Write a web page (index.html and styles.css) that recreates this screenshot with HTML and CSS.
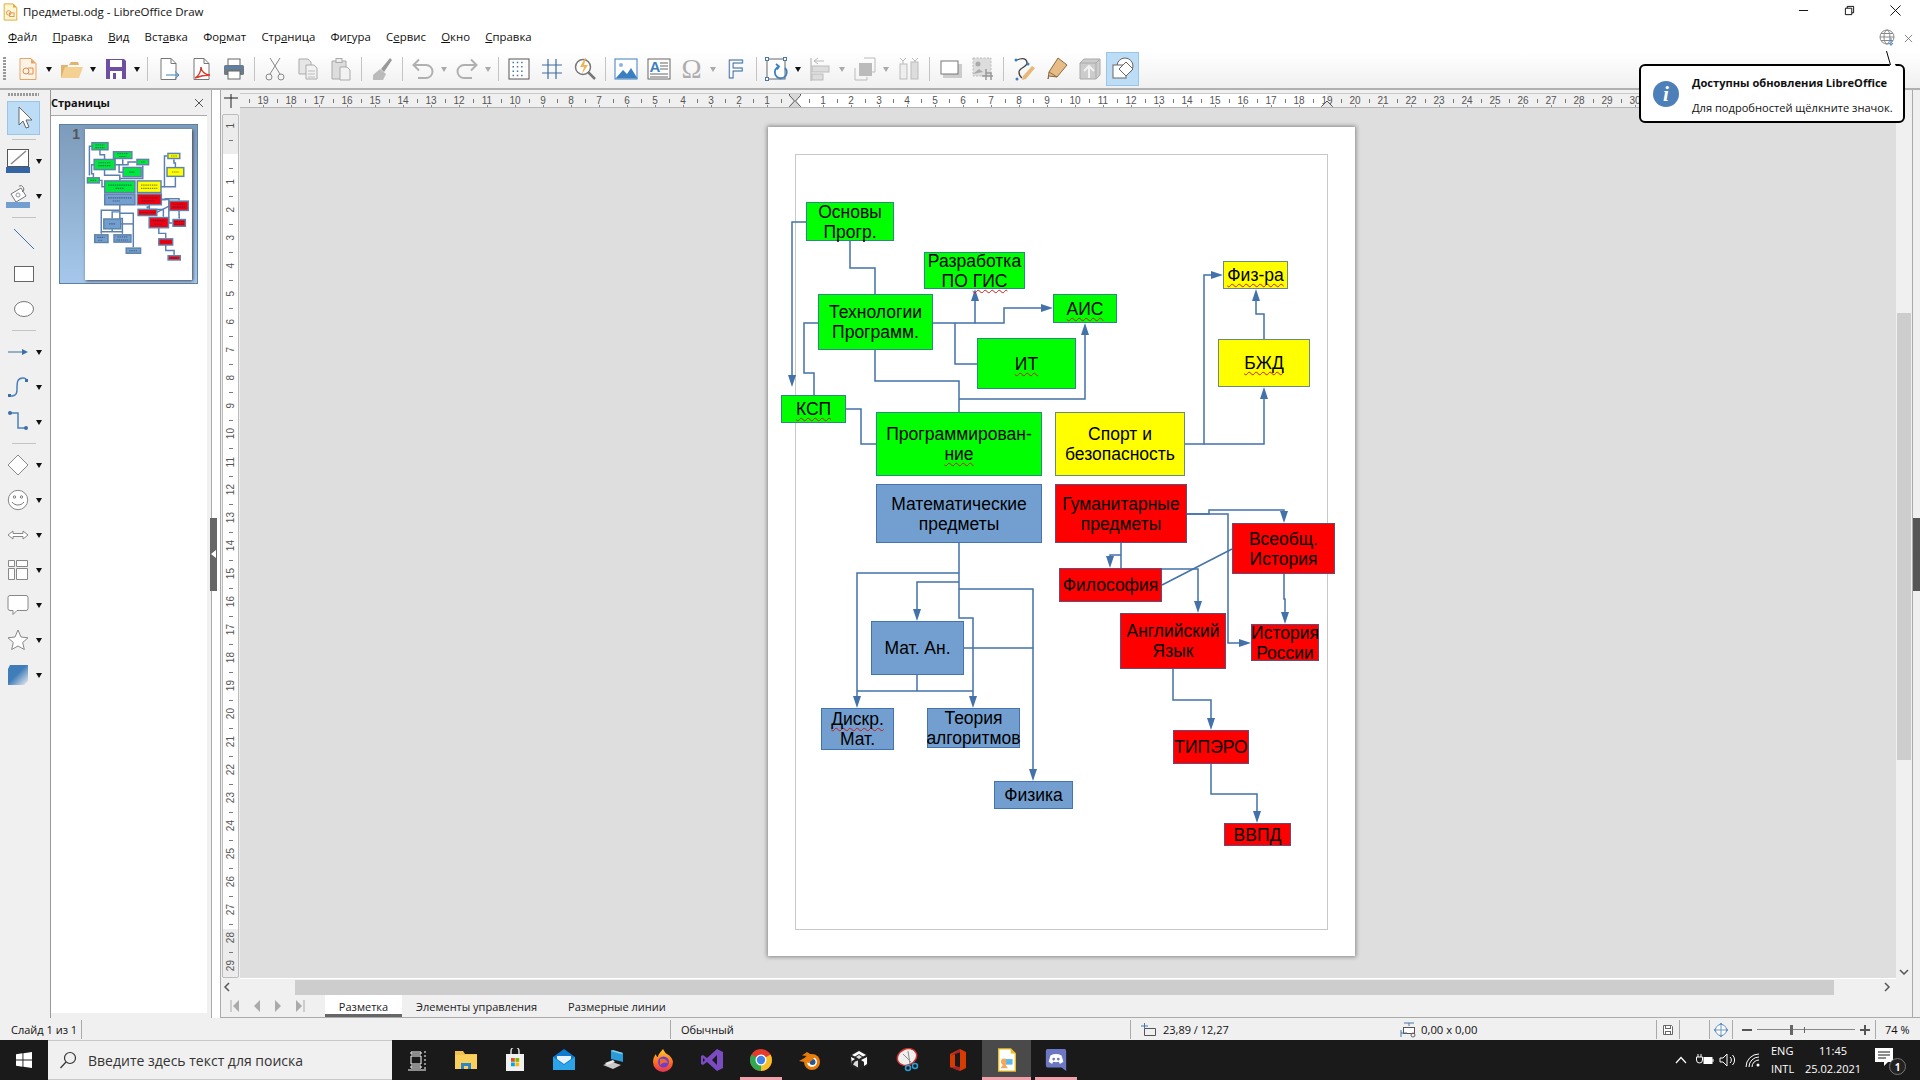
FILE: index.html
```html
<!DOCTYPE html>
<html lang="ru">
<head>
<meta charset="utf-8">
<title>Предметы.odg - LibreOffice Draw</title>
<link rel="stylesheet" href="styles.css">
</head>
<body>
<header class="titlebar">
  <svg class="app-ic" viewBox="0 0 16 20"><path d="M1 1h10l4 4v14H1z" fill="#fff6d8" stroke="#d9a820"/><path d="M11 1v4h4z" fill="#d9a820"/><circle cx="6" cy="11" r="2.5" fill="none" stroke="#e09040"/><rect x="7" y="11" width="5" height="4" fill="none" stroke="#e09040"/></svg>
  <span class="title-text">Предметы.odg - LibreOffice Draw</span>
  <div class="winbtns">
    <svg viewBox="0 0 12 12"><path d="M1 6h10" stroke="#000"/></svg>
    <svg viewBox="0 0 12 12"><path d="M1.500 3.500h7v7h-7zM3.500 3.500v-2h7v7h-2" fill="none" stroke="#000"/></svg>
    <svg viewBox="0 0 12 12"><path d="M.5 .5l11 11M11.500 .5l-11 11" stroke="#000" fill="none"/></svg>
  </div>
</header>
<nav class="menubar">
  <span><u>Ф</u>айл</span><span><u>П</u>равка</span><span><u>В</u>ид</span><span>Вст<u>а</u>вка</span><span>Фо<u>р</u>мат</span><span>Стр<u>а</u>ница</span><span>Фи<u>г</u>ура</span><span>С<u>е</u>рвис</span><span><u>О</u>кно</span><span><u>С</u>правка</span>
  <div class="menu-right">
    <svg class="globe" viewBox="0 0 16 18"><circle cx="8" cy="8" r="7" fill="none" stroke="#888"/><ellipse cx="8" cy="8" rx="3" ry="7" fill="none" stroke="#888"/><path d="M1 8h14M2 4.500h12M2 11.500h12" stroke="#888" fill="none"/><path d="M12 9v7m-2-2l2 2.500 2-2.500" stroke="#4a86c8" fill="none"/></svg>
    <svg class="mclose" viewBox="0 0 10 10"><path d="M1 1l8 8M9 1l-8 8" stroke="#777" fill="none"/></svg>
  </div>
</nav>
<div class="toolbar">
  <i class="grip-v"></i>
  <b class="t"><svg viewBox="0 0 24 24"><path d="M4 1.500h11l5 5v16H4z" fill="#fdf3e6" stroke="#e6a565"/><path d="M15 1.500l5 5h-5z" fill="#e6a565"/><circle cx="10" cy="14" r="3" fill="none" stroke="#e08a45"/><path d="M12 11h5v6h-5" fill="none" stroke="#e08a45"/></svg></b><b class="d"></b>
  <b class="t"><svg viewBox="0 0 24 24"><path d="M1 21V8h8l2-3h7l1 3h-11L5 21z" fill="#e2b36c"/><path d="M1 21L5 10h18l-4 11z" fill="#f4d193"/></svg></b><b class="d"></b>
  <b class="t"><svg viewBox="0 0 24 24"><path d="M2 2h18l2 2v18H2z" fill="#6e4ea3"/><rect x="6" y="3" width="12" height="7" fill="#fff"/><rect x="6" y="14" width="12" height="8" fill="#fff"/><rect x="9" y="16" width="3" height="6" fill="#6e4ea3"/></svg></b><b class="d"></b>
  <i class="sep"></i>
  <b class="t"><svg viewBox="0 0 24 24"><path d="M5 1.500h10l5 5v16H5z" fill="#fff" stroke="#777"/><path d="M15 1.500v5h5" fill="none" stroke="#777"/><path d="M10 18h13m-4-3.500l4 3.500-4 3.500" fill="none" stroke="#3c7fc0"/></svg></b>
  <b class="t"><svg viewBox="0 0 24 24"><path d="M5 1.500h10l5 5v16H5z" fill="#fff" stroke="#777"/><path d="M15 1.500v5h5" fill="none" stroke="#777"/><path d="M6 21c4-2 6-7 6-11 0 4 4 8 9 8-4 0-10 1-15 3z" fill="none" stroke="#d93a2b" stroke-width="1.500"/></svg></b>
  <b class="t"><svg viewBox="0 0 24 24"><rect x="6" y="2" width="12" height="7" fill="#fff" stroke="#666"/><rect x="2" y="8" width="20" height="10" rx="1.500" fill="#6f7a85"/><rect x="6" y="14" width="12" height="8" fill="#fff" stroke="#666"/><rect x="3" y="10" width="18" height="1.500" fill="#4a86c8"/></svg></b>
  <i class="sep"></i>
  <b class="t off"><svg viewBox="0 0 24 24"><circle cx="6" cy="20" r="3" fill="none" stroke="#888"/><circle cx="18" cy="20" r="3" fill="none" stroke="#888"/><path d="M7 17L17 1M17 17L7 1" stroke="#888" fill="none"/></svg></b>
  <b class="t off"><svg viewBox="0 0 24 24"><path d="M3 2h9l3 3v12H3z" fill="#e6e6e6" stroke="#aaa"/><path d="M10 8h8l3 3v11H10z" fill="#f2f2f2" stroke="#aaa"/><path d="M12 14h7M12 17h7M12 20h7" stroke="#bbb"/></svg></b>
  <b class="t off"><svg viewBox="0 0 24 24"><path d="M3 4h14v18H3z" fill="#ddd" stroke="#aaa"/><rect x="7" y="1.500" width="6" height="4" fill="#eee" stroke="#aaa"/><path d="M11 10h7l3 3v10H11z" fill="#f2f2f2" stroke="#aaa"/></svg></b>
  <i class="sep"></i>
  <b class="t off"><svg viewBox="0 0 24 24"><path d="M20 1L11 12l3 3 8-12z" fill="#999"/><path d="M10 12L3 18v5h10l3-6z" fill="#bbb"/></svg></b>
  <i class="sep"></i>
  <b class="t off"><svg viewBox="0 0 24 24"><path d="M3 8h12a6.500 6.500 0 010 13H7M8 2.500L2.500 8 8 13.500" fill="none" stroke="#b0b0b0" stroke-width="2"/></svg></b><b class="d off"></b>
  <b class="t off"><svg viewBox="0 0 24 24"><path d="M21 8H9a6.500 6.500 0 000 13h8M16 2.500L21.500 8 16 13.500" fill="none" stroke="#b0b0b0" stroke-width="2"/></svg></b><b class="d off"></b>
  <i class="sep"></i>
  <b class="t"><svg viewBox="0 0 24 24"><rect x="2" y="2" width="20" height="20" fill="#fff" stroke="#555"/><path d="M5.500 5.500h13M5.500 9.800h13M5.500 14.200h13M5.500 18.500h13" stroke="#4a76a8" stroke-width="1.500" stroke-dasharray="1.500 2.800"/></svg></b>
  <b class="t"><svg viewBox="0 0 24 24"><path d="M2 8h20M2 16h20M8 2v20M16 2v20" stroke="#3f6d9e" stroke-width="1.200"/></svg></b>
  <b class="t"><svg viewBox="0 0 24 24"><circle cx="10" cy="10" r="7.500" fill="#fff" stroke="#777" stroke-width="1.500"/><path d="M15 15l7 7" stroke="#777" stroke-width="2.500"/><path d="M12 1L7 10h4l-2 7 6-9h-4l2-7z" fill="#efb45a"/></svg></b>
  <i class="sep"></i>
  <b class="t"><svg viewBox="0 0 24 24"><rect x="1" y="2" width="22" height="20" fill="#fff" stroke="#3c7fc0"/><circle cx="7" cy="8" r="2" fill="#8cb4dc"/><path d="M1.500 21.500L9 13l4 4 4-6 6.500 10.500z" fill="#3c7fc0"/></svg></b>
  <b class="t"><svg viewBox="0 0 24 24"><rect x="1" y="2" width="22" height="20" fill="#fff" stroke="#666"/><text x="2.500" y="15" class="i-a">A</text><path d="M13 6h8M13 9h8M13 12h8M3 17h18M3 20h18" stroke="#666"/></svg></b>
  <b class="t off omega">Ω</b><b class="d off"></b>
  <b class="t ftxt">F</b>
  <i class="sep"></i>
  <b class="t"><svg viewBox="0 0 24 24"><rect x="2" y="2" width="18" height="20" fill="#fff" stroke="#666"/><rect x="0.500" y="0.500" width="3" height="3" fill="#fff" stroke="#4a76a8"/><rect x="18.500" y="0.500" width="3" height="3" fill="#fff" stroke="#4a76a8"/><rect x="0.500" y="20.500" width="3" height="3" fill="#fff" stroke="#4a76a8"/><path d="M20 11a6 6 0 11-6-1.500M11 7l3 2.500-2 3" fill="none" stroke="#3c7fc0" stroke-width="1.800"/></svg></b><b class="d"></b>
  <b class="t off"><svg viewBox="0 0 24 24"><path d="M2 1v23" stroke="#aaa"/><path d="M9 1L5 4l4 3M5 4h10" fill="none" stroke="#bbb"/><rect x="3" y="9" width="17" height="6" fill="#ddd" stroke="#bbb"/><rect x="3" y="17" width="11" height="6" fill="#ddd" stroke="#bbb"/></svg></b><b class="d off"></b>
  <b class="t off"><svg viewBox="0 0 24 24"><path d="M11 1h11v14h-3M2 11v12h12v-3" fill="none" stroke="#bbb"/><rect x="6" y="6" width="13" height="13" fill="#bbb"/></svg></b><b class="d off"></b>
  <b class="t off"><svg viewBox="0 0 24 24"><rect x="3" y="7" width="7" height="15" fill="#eee" stroke="#bbb"/><rect x="14" y="5" width="7" height="17" fill="#ddd" stroke="#bbb"/><path d="M3 1l3 3 3-3M15 1l3 3 3-3M6 4v3M18 3v2" fill="none" stroke="#bbb"/></svg></b>
  <i class="sep"></i>
  <b class="t off"><svg viewBox="0 0 24 24"><rect x="5" y="7" width="19" height="14" fill="#ccc"/><rect x="3" y="4" width="17" height="13" fill="#fff" stroke="#777"/></svg></b>
  <b class="t off"><svg viewBox="0 0 24 24"><rect x="2" y="1" width="18" height="18" fill="#ddd" stroke="#bbb" stroke-dasharray="2 1.500"/><circle cx="7" cy="7" r="2.500" fill="#aaa"/><path d="M2 17l6-5 4 3" fill="#aaa"/><path d="M15 12v11M11 19h11M15 16h5v7" fill="none" stroke="#999" stroke-width="1.500"/></svg></b>
  <i class="sep"></i>
  <b class="t"><svg viewBox="0 0 24 24"><path d="M5 3c6-3 10-1 10 3s-8 5-8 9 3 6 3 6" fill="none" stroke="#444" stroke-width="1.300"/><circle cx="4" cy="3" r="1.500" fill="#3c7fc0"/><circle cx="16" cy="7" r="1.500" fill="#3c7fc0"/><circle cx="5" cy="22" r="1.500" fill="#3c7fc0"/><path d="M11 19l9-10 3 2-9 11-4 1z" fill="#e8b878"/></svg></b>
  <b class="t"><svg viewBox="0 0 24 24"><path d="M13 1l9 7-10 12-8-1-1 3 1-7z" fill="#e8bd85" stroke="#8a6a45"/><path d="M4 15l8 5" stroke="#8a6a45" fill="none"/></svg></b>
  <b class="t off"><svg viewBox="0 0 24 24"><path d="M2 6l4-4h16v16l-4 4H2z" fill="#ccc" stroke="#aaa"/><path d="M2 6h16v16M18 6l4-4" fill="none" stroke="#aaa"/><path d="M11 21V9m-5 5l5-5 5 5" fill="none" stroke="#f2f2f2" stroke-width="2"/></svg></b>
  <b class="t on"><svg viewBox="0 0 24 24"><circle cx="14" cy="9" r="8" fill="#fff" stroke="#666"/><rect x="2" y="8" width="13" height="13" fill="#fff" stroke="#666"/><path d="M15 5l7 7-7 7-7-7z" fill="#fff" stroke="#666"/></svg></b>
</div>
<div class="work">
  <aside class="tools">
    <i class="grip-h"></i>
    <div class="row solo"><b class="l on"><svg viewBox="0 0 24 24"><path d="M7 1v18l4-4 3 7 3-1-3-7h6z" fill="#fff" stroke="#666"/></svg></b></div>
    <i class="hsep"></i>
    <div class="row"><b class="l"><svg viewBox="0 0 24 24"><rect x="1.500" y="0.500" width="21" height="17" fill="#fff" stroke="#555"/><path d="M5 15L20 2" stroke="#888" stroke-width="1.500"/><rect x="0" y="18" width="24" height="6" fill="#3465a4"/></svg></b><b class="d"></b></div>
    <div class="row"><b class="l"><svg viewBox="0 0 24 24"><path d="M5 10l10-6 5 8-10 6z" fill="#fff" stroke="#777"/><path d="M13 2a3 3 0 013 6" fill="none" stroke="#777"/><circle cx="12" cy="11" r="2" fill="none" stroke="#999"/><rect x="0" y="18" width="24" height="6" fill="#729fcf"/></svg></b><b class="d"></b></div>
    <i class="hsep"></i>
    <div class="row solo"><b class="l"><svg viewBox="0 0 24 24"><path d="M2 2l20 20" stroke="#3c70a8"/></svg></b></div>
    <div class="row solo"><b class="l"><svg viewBox="0 0 24 24"><rect x="2.500" y="4.500" width="19" height="15" fill="#fff" stroke="#666"/></svg></b></div>
    <div class="row solo"><b class="l"><svg viewBox="0 0 24 24"><ellipse cx="12" cy="12" rx="9.500" ry="7.500" fill="#fff" stroke="#777"/></svg></b></div>
    <i class="hsep"></i>
    <div class="row"><b class="l"><svg viewBox="0 0 24 24"><path d="M2 12h18" stroke="#3c70a8"/><path d="M22 12l-6-3v6z" fill="#3c70a8"/></svg></b><b class="d"></b></div>
    <div class="row"><b class="l"><svg viewBox="0 0 24 24"><path d="M4 21c8 0 7-5 7-9s0-9 6-9c2 0 3 1 3 2" fill="none" stroke="#4a80b8" stroke-width="1.500"/><rect x="2" y="19" width="3" height="3" fill="#3c70a8"/><rect x="19" y="4" width="3" height="3" fill="#3c70a8"/></svg></b><b class="d"></b></div>
    <div class="row"><b class="l"><svg viewBox="0 0 24 24"><path d="M4 3h8v15h9" fill="none" stroke="#4a80b8" stroke-width="1.500"/><circle cx="4" cy="3" r="2" fill="#3c70a8"/><circle cx="20" cy="18" r="2" fill="#3c70a8"/></svg></b><b class="d"></b></div>
    <i class="hsep"></i>
    <div class="row"><b class="l"><svg viewBox="0 0 24 24"><path d="M12 2l10 10-10 10L2 12z" fill="#fff" stroke="#888"/></svg></b><b class="d"></b></div>
    <div class="row"><b class="l"><svg viewBox="0 0 24 24"><circle cx="12" cy="12" r="9.700" fill="#fff" stroke="#888"/><circle cx="8.500" cy="9" r="1.200" fill="none" stroke="#777"/><circle cx="15.500" cy="9" r="1.200" fill="none" stroke="#777"/><path d="M6 14c3 4 9 4 12 0" fill="none" stroke="#777"/></svg></b><b class="d"></b></div>
    <div class="row"><b class="l"><svg viewBox="0 0 24 24"><path d="M2 12l5-4v2.500h10V8l5 4-5 4v-2.500H7V16z" fill="#fff" stroke="#888"/></svg></b><b class="d"></b></div>
    <div class="row"><b class="l"><svg viewBox="0 0 24 24"><path d="M2.500 2.500h6v6h-6zM10.500 2.500h11v6h-11zM2.500 10.500h6v11h-6zM10.500 10.500h11v11h-11z" fill="#fff" stroke="#888"/></svg></b><b class="d"></b></div>
    <div class="row"><b class="l"><svg viewBox="0 0 24 24"><path d="M4 2.500h16a2 2 0 012 2v11a2 2 0 01-2 2H11l-4 4v-4H4a2 2 0 01-2-2v-11a2 2 0 012-2z" fill="#fff" stroke="#888"/></svg></b><b class="d"></b></div>
    <div class="row"><b class="l"><svg viewBox="0 0 24 24"><path d="M12 2l3 7 7 .8-5.300 4.700 1.600 7L12 18l-6.300 3.500 1.600-7L2 9.800 9 9z" fill="#fff" stroke="#888"/></svg></b><b class="d"></b></div>
    <div class="row"><b class="l"><svg viewBox="0 0 24 24"><defs><linearGradient id="cube" x1="0" y1="0" x2="1" y2="1"><stop offset=".45" stop-color="#3f7cba"/><stop offset="1" stop-color="#f0f0f0"/></linearGradient></defs><path d="M4 2h18v16l-4 4H2V6z" fill="url(#cube)"/></svg></b><b class="d"></b></div>
  </aside>
  <section class="pages">
    <div class="pages-head"><strong>Страницы</strong><svg viewBox="0 0 10 10"><path d="M1 1l8 8M9 1l-8 8" stroke="#555" fill="none"/></svg></div>
    <div class="pages-list">
      <div class="thumb">
        <span class="thumb-no">1</span>
        <svg class="thumb-page" viewBox="768 127 587 829">
          <rect x="768" y="127" width="587" height="829" fill="#fff"/>
          <g class="thumb-wires"><use href="#wires"/></g>
          <g class="thumb-box">
            <rect class="g" x="806" y="202" width="88" height="39"/><rect class="g" x="924" y="252" width="101" height="37"/><rect class="g" x="818" y="294" width="115" height="56"/><rect class="g" x="1053" y="294" width="64" height="29"/><rect class="g" x="977" y="338" width="99" height="51"/><rect class="g" x="781" y="395" width="65" height="28"/><rect class="g" x="876" y="412" width="166" height="64"/>
            <rect class="y" x="1223" y="261" width="65" height="28"/><rect class="y" x="1218" y="339" width="92" height="48"/><rect class="y" x="1055" y="412" width="130" height="64"/>
            <rect class="b" x="876" y="484" width="166" height="59"/><rect class="b" x="871" y="621" width="93" height="54"/><rect class="b" x="821" y="708" width="73" height="42"/><rect class="b" x="927" y="708" width="93" height="40"/><rect class="b" x="994" y="781" width="79" height="28"/>
            <rect class="r" x="1055" y="484" width="132" height="59"/><rect class="r" x="1232" y="523" width="103" height="51"/><rect class="r" x="1059" y="568" width="103" height="34"/><rect class="r" x="1120" y="613" width="106" height="56"/><rect class="r" x="1251" y="624" width="68" height="37"/><rect class="r" x="1173" y="730" width="76" height="34"/><rect class="r" x="1224" y="823" width="67" height="23"/>
          </g>
          <path class="thumb-greek" d="M825 215h50M825 229h50M945 263h60M955 278h40M840 312h70M840 328h70M1075 308h20M1010 364h30M798 409h30M895 435h130M935 453h45M895 505h130M920 522h40M1240 275h35M1245 363h40M1075 435h90M1075 453h90M1075 505h90M1080 522h70M1250 540h65M1250 556h65M1070 585h80M1140 630h65M1150 650h40M1258 635h55M1258 650h55M900 648h35M835 722h40M840 738h25M945 720h55M940 736h65M1010 795h45M1185 747h50M1240 835h35"/>
        </svg>
      </div>
    </div>
  </section>
  <div class="splitter"><div class="handle"><i></i></div></div>
  <main class="main">
    <div class="ruler-row">
      <div class="corner"><svg viewBox="0 0 14 14"><path d="M7 0v14M0 4h14" stroke="#222" fill="none"/></svg></div>
      <div class="hruler">
        <span>19</span><span>18</span><span>17</span><span>16</span><span>15</span><span>14</span><span>13</span><span>12</span><span>11</span><span>10</span><span>9</span><span>8</span><span>7</span><span>6</span><span>5</span><span>4</span><span>3</span><span>2</span><span>1</span><span></span><span>1</span><span>2</span><span>3</span><span>4</span><span>5</span><span>6</span><span>7</span><span>8</span><span>9</span><span>10</span><span>11</span><span>12</span><span>13</span><span>14</span><span>15</span><span>16</span><span>17</span><span>18</span><span>19</span><span>20</span><span>21</span><span>22</span><span>23</span><span>24</span><span>25</span><span>26</span><span>27</span><span>28</span><span>29</span><span>30</span>
        <svg class="marker m-left" viewBox="0 0 12 16"><path d="M.5 .5h11v2L6.500 8l5 5.500v2H.5v-2L5.500 8 .5 2.500z" fill="#d8d8d8" stroke="#555"/></svg>
        <svg class="marker m-right" viewBox="0 0 12 16"><path d="M.5 15.500h11v-2L6 8 .5 13.500z" fill="#e8e8e8" stroke="#555"/></svg>
      </div>
    </div>
    <div class="mid">
      <div class="vruler"><div class="vcells">
        <span><em>1</em></span><span><em></em></span><span><em>1</em></span><span><em>2</em></span><span><em>3</em></span><span><em>4</em></span><span><em>5</em></span><span><em>6</em></span><span><em>7</em></span><span><em>8</em></span><span><em>9</em></span><span><em>10</em></span><span><em>11</em></span><span><em>12</em></span><span><em>13</em></span><span><em>14</em></span><span><em>15</em></span><span><em>16</em></span><span><em>17</em></span><span><em>18</em></span><span><em>19</em></span><span><em>20</em></span><span><em>21</em></span><span><em>22</em></span><span><em>23</em></span><span><em>24</em></span><span><em>25</em></span><span><em>26</em></span><span><em>27</em></span><span><em>28</em></span><span><em>29</em></span>
      </div></div>
      <div class="canvas">
        <div class="page">
          <div class="margins"></div>
          <svg class="wires-svg" viewBox="768 127 587 829">
            <g id="wires">
              <polyline class="w" points="806,222 792,222 792,380"/>
              <polygon class="a" points="792,387 788,375 796,375"/>
              <polyline class="w" points="850,241 850,268 875,268 875,294"/>
              <polyline class="w" points="818,323 804,323 804,373 814,373 814,395"/>
              <polyline class="w" points="933,323 975,323 975,296"/>
              <polygon class="a" points="975,289 971,301 979,301"/>
              <polyline class="w" points="975,323 1004,323 1004,308 1046,308"/>
              <polygon class="a" points="1053,308 1041,304 1041,312"/>
              <polyline class="w" points="955,323 955,364 977,364"/>
              <polyline class="w" points="875,350 875,381 959,381 959,412"/>
              <polyline class="w" points="959,399 1085,399 1085,330"/>
              <polygon class="a" points="1085,323 1081,335 1089,335"/>
              <polyline class="w" points="846,409 861,409 861,444 876,444"/>
              <polyline class="w" points="1185,444 1204,444 1204,275 1216,275"/>
              <polygon class="a" points="1223,275 1211,271 1211,279"/>
              <polyline class="w" points="1204,444 1264,444 1264,394"/>
              <polygon class="a" points="1264,387 1260,399 1268,399"/>
              <polyline class="w" points="1264,339 1264,314 1256,314 1256,296"/>
              <polygon class="a" points="1256,289 1252,301 1260,301"/>
              <polyline class="w" points="959,543 959,618 973,618 973,700"/>
              <polyline class="w" points="959,573 857,573 857,700"/>
              <polygon class="a" points="857,708 853,696 861,696"/>
              <polyline class="w" points="959,582 917,582 917,614"/>
              <polygon class="a" points="917,621 913,609 921,609"/>
              <polyline class="w" points="959,589 1033,589 1033,774"/>
              <polygon class="a" points="1033,781 1029,769 1037,769"/>
              <polygon class="a" points="973,708 969,696 977,696"/>
              <polyline class="w" points="917,675 917,691"/>
              <polyline class="w" points="857,691 973,691"/>
              <polyline class="w" points="964,648 1033,648"/>
              <polyline class="w" points="1187,514 1209,514 1209,510 1284,510 1284,516"/>
              <polygon class="a" points="1284,523 1280,511 1288,511"/>
              <polyline class="w" points="1187,514 1228,514 1228,643 1244,643"/>
              <polygon class="a" points="1251,643 1239,639 1239,647"/>
              <polyline class="w" points="1121,543 1121,569 1198,569 1198,606"/>
              <polygon class="a" points="1198,613 1194,601 1202,601"/>
              <polyline class="w" points="1121,555 1110,555 1110,561"/>
              <polygon class="a" points="1110,568 1106,556 1114,556"/>
              <polyline class="w" points="1162,585 1232,549"/>
              <polyline class="w" points="1284,574 1284,599 1285,599 1285,617"/>
              <polygon class="a" points="1285,624 1281,612 1289,612"/>
              <polyline class="w" points="1173,669 1173,700 1211,700 1211,723"/>
              <polygon class="a" points="1211,730 1207,718 1215,718"/>
              <polyline class="w" points="1211,764 1211,794 1257,794 1257,816"/>
              <polygon class="a" points="1257,823 1253,811 1261,811"/>
            </g>
          </svg>
          <div class="node green n-osn"><p>Основы<br>Прогр.</p></div>
          <div class="node green n-raz"><p>Разработка<br>ПО <span class="sp">ГИС</span></p></div>
          <div class="node green n-teh"><p>Технологии<br>Программ.</p></div>
          <div class="node green n-ais"><p><span class="sp">АИС</span></p></div>
          <div class="node green n-it"><p><span class="sp">ИТ</span></p></div>
          <div class="node yellow n-fiz"><p><span class="sp">Физ-ра</span></p></div>
          <div class="node yellow n-bzd"><p><span class="sp">БЖД</span></p></div>
          <div class="node green n-ksp"><p><span class="sp">КСП</span></p></div>
          <div class="node green n-pro"><p>Программирован-<br><span class="sp">ние</span></p></div>
          <div class="node yellow n-spo"><p>Спорт и<br>безопасность</p></div>
          <div class="node blue n-mat"><p>Математические<br>предметы</p></div>
          <div class="node red n-gum"><p>Гуманитарные<br>предметы</p></div>
          <div class="node red n-vse"><p>Всеобщ.<br>История</p></div>
          <div class="node red n-fil"><p>Философия</p></div>
          <div class="node red n-ang"><p>Английский<br>Язык</p></div>
          <div class="node red n-ist"><p>История<br>России</p></div>
          <div class="node blue n-man"><p>Мат. Ан.</p></div>
          <div class="node blue n-dis"><p><span class="sp">Дискр.</span><br>Мат.</p></div>
          <div class="node blue n-teo"><p>Теория<br>алгоритмов</p></div>
          <div class="node blue n-fzk"><p>Физика</p></div>
          <div class="node red n-tip"><p>ТИПЭРО</p></div>
          <div class="node red n-vvp"><p>ВВПД</p></div>
        </div>
      </div>
      <div class="vscroll">
        <div class="vthumb"></div>
        <svg class="chev-down" viewBox="0 0 10 6"><path d="M1 1l4 4 4-4" stroke="#555" stroke-width="1.500" fill="none"/></svg>
      </div>
    </div>
    <div class="hscroll">
      <svg viewBox="0 0 6 10"><path d="M5 1L1 5l4 4" stroke="#555" stroke-width="1.500" fill="none"/></svg>
      <div class="hthumb"></div>
      <svg viewBox="0 0 6 10"><path d="M1 1l4 4-4 4" stroke="#555" stroke-width="1.500" fill="none"/></svg>
    </div>
    <div class="tabs">
      <div class="tabnav">
        <svg viewBox="0 0 10 14"><path d="M1 1v12" stroke="#aaa"/><path d="M9 1v12L3 7z" fill="#aaa"/></svg>
        <svg viewBox="0 0 10 14"><path d="M8 1v12L2 7z" fill="#aaa"/></svg>
        <svg viewBox="0 0 10 14"><path d="M2 1v12l6-6z" fill="#aaa"/></svg>
        <svg viewBox="0 0 10 14"><path d="M1 1v12l6-6z" fill="#aaa"/><path d="M9 1v12" stroke="#aaa"/></svg>
      </div>
      <span class="tab active">Разметка</span>
      <span class="tab">Элементы управления</span>
      <span class="tab">Размерные линии</span>
    </div>
  </main>
  <aside class="sidebar"><div class="handle"><i></i></div></aside>
</div>
<footer class="status">
  <div class="seg s1">Слайд 1 из 1</div>
  <div class="seg s2"></div>
  <div class="seg s3">Обычный</div>
  <div class="seg s4"><svg viewBox="0 0 16 14"><path d="M3.500 5.500h11v7h-11z" fill="none" stroke="#555"/><path d="M3.500 0v6M0 3h7" stroke="#4a76a8"/></svg>23,89 / 12,27</div>
  <div class="seg s5"><svg viewBox="0 0 18 16"><path d="M4 1h10M9 1v3" stroke="#4a76a8"/><rect x="3.500" y="5.500" width="11" height="6" fill="#fff" stroke="#555"/><path d="M1 8v7M1 11h6" stroke="#4a76a8"/><circle cx="13" cy="13" r="2" fill="none" stroke="#666"/></svg>0,00 x 0,00</div>
  <div class="seg s6"><svg viewBox="0 0 12 12"><path d="M1.500 1.500h8l1 1v8h-9z" fill="#fff" stroke="#666"/><rect x="3.500" y="1.500" width="5" height="3" fill="none" stroke="#666"/><rect x="3.500" y="7.500" width="5" height="3" fill="none" stroke="#666"/></svg></div>
  <div class="seg s7"></div>
  <div class="seg s8"><svg viewBox="0 0 16 16"><circle cx="8" cy="8" r="5.500" fill="#fff" stroke="#6a96c8"/><path d="M8 1v14M1 8h14M6 3l2-2 2 2M6 13l2 2 2-2M3 6L1 8l2 2M13 6l2 2-2 2" fill="none" stroke="#6a96c8"/></svg></div>
  <div class="seg s9">
    <i class="zm"></i>
    <div class="slider"><i class="knob"></i><i class="mid-tick"></i></div>
    <i class="zp"></i>
  </div>
  <div class="seg s10">74 %</div>
</footer>
<div class="taskbar">
  <div class="start"><svg viewBox="0 0 16 16"><path d="M0 2.200l6.500-.9v6.200H0zM7.400 1.200L16 0v7.500H7.400zM0 8.400h6.500v6.300L0 13.800zM7.400 8.400H16V16l-8.600-1.200z" fill="#fff"/></svg></div>
  <div class="search"><svg viewBox="0 0 18 18"><circle cx="11" cy="7" r="5.500" fill="none" stroke="#333" stroke-width="1.200"/><path d="M7 11l-5.500 6" stroke="#333" stroke-width="1.200"/></svg><span>Введите здесь текст для поиска</span></div>
  <div class="apps">
    <div class="app"><svg viewBox="0 0 24 24"><path d="M6 4h10v2H6zM6 18h10v2H6zM6 8h10v8H6z" fill="none" stroke="#fff"/><path d="M19 4h2M19 8h2M19 12h2M19 16h2M19 20h2M3 22h18" stroke="#fff"/></svg></div>
    <div class="app"><svg viewBox="0 0 24 24"><path d="M1 3h8l2 3h12v15H1z" fill="#f2c14e"/><path d="M1 7h22v14H1z" fill="#fad05c"/><path d="M7 21v-6h10v6h-3v-3h-4v3z" fill="#2c84c9"/></svg></div>
    <div class="app"><svg viewBox="0 0 24 24"><path d="M8 6V3a4 4 0 018 0v3" fill="none" stroke="#ddd" stroke-width="1.500"/><rect x="3" y="6" width="18" height="17" fill="#f1f1f1"/><rect x="8" y="10" width="3.800" height="3.800" fill="#e0522a"/><rect x="12.400" y="10" width="3.800" height="3.800" fill="#7fba00"/><rect x="8" y="14.500" width="3.800" height="3.800" fill="#00a4ef"/><rect x="12.400" y="14.500" width="3.800" height="3.800" fill="#ffb900"/></svg></div>
    <div class="app"><svg viewBox="0 0 24 24"><path d="M12 1L1 9v13h22V9z" fill="#0c7bd0"/><path d="M1 9l11 8 11-8v13H1z" fill="#2ba5e8"/><path d="M5 8h14v3l-7 5-7-5z" fill="#e7f2fb"/></svg></div>
    <div class="app"><svg viewBox="0 0 24 24"><path d="M10 2l12 3v9l-12-3z" fill="#2a9bd8"/><path d="M12 2l10 3-2 1-10-3z" fill="#8ad0f2"/><path d="M2 17l9-3 9 3-8 4z" fill="#c9c9c9"/><path d="M4 15l8-3 2 2-8 3z" fill="#e8e8e8"/></svg></div>
    <div class="app"><svg viewBox="0 0 24 24"><defs><linearGradient id="ff" x1="0" y1="0" x2="0" y2="1"><stop offset="0" stop-color="#ffcb2e"/><stop offset=".6" stop-color="#ff6a1f"/><stop offset="1" stop-color="#e4325a"/></linearGradient></defs><path d="M12 1c2 3 2 4 4 5 4 2 6 6 6 8a10 10 0 01-20 0c0-3 1-6 3-8 0 2 1 3 2 3 0-3 3-5 5-8z" fill="url(#ff)"/><circle cx="12.500" cy="14" r="5.500" fill="#6d3fd1"/><path d="M9 11c3-1 7 0 8 4-2-1-5-1-8 2z" fill="#f26a2b"/></svg></div>
    <div class="app"><svg viewBox="0 0 24 24"><path d="M17 1l6 3v16l-6 3L7 14l-4 3-2-1V8l2-1 4 3z" fill="#7b4bc2"/><path d="M17 7l-5 5 5 5z" fill="#1b1a1a"/><path d="M3 10v4l2-2z" fill="#1b1a1a"/></svg></div>
    <div class="app"><svg viewBox="0 0 24 24"><circle cx="12" cy="12" r="11" fill="#e33b2e"/><path d="M12 12L21.500 6.500A11 11 0 0112 23z" fill="#f6c026"/><path d="M12 12v11A11 11 0 012.500 6.500z" fill="#2fa84f"/><circle cx="12" cy="12" r="5.500" fill="#fff"/><circle cx="12" cy="12" r="4.200" fill="#3f83e8"/></svg></div>
    <div class="app"><svg viewBox="0 0 24 24"><circle cx="14" cy="14" r="8" fill="#e87d0d"/><circle cx="14" cy="14" r="5" fill="#fff"/><circle cx="14.500" cy="14" r="3" fill="#26578e"/><path d="M1 13l9-5-6-.5 5-3.500 8 5-6 6z" fill="#e87d0d"/></svg></div>
    <div class="app"><svg viewBox="0 0 24 24"><path d="M12 1l9 5.500v11L12 23l-9-5.500v-11z" fill="#222"/><path d="M12 3l7 4-3 1.500L12 6 8 8.500 5 7zM20 9v7l-3 2v-4l-3-2 3-1.500zM4 9l4 2-3 2v3z" fill="#fff"/><path d="M12 7l3 2-3 2-3-2zM11 12.500v7l-5-3 2-3z" fill="#ddd"/></svg></div>
    <div class="app"><svg viewBox="0 0 24 24"><ellipse cx="11" cy="9" rx="10" ry="8" transform="rotate(-25 11 9)" fill="#f1eeee" stroke="#c33" stroke-width="1.500"/><path d="M12 3l2 13M7 6l8 8" stroke="#888" stroke-width="1" fill="none"/><circle cx="12" cy="20" r="2.500" fill="none" stroke="#26a0da" stroke-width="1.500"/><circle cx="19" cy="18" r="2.500" fill="none" stroke="#26a0da" stroke-width="1.500"/></svg></div>
    <div class="app"><svg viewBox="0 0 24 24"><path d="M4 6l10-5 6 3v16l-6 3-10-4z" fill="#d83b01"/><path d="M14 1v22l-10-4 6 0V6L4 8z" fill="#a4262c"/><path d="M9 6l5-1.500V19l-5-1z" fill="#1b1a1a"/></svg></div>
    <div class="app active"><svg viewBox="0 0 20 26"><path d="M1 1h13l5 5v19H1z" fill="#fff" stroke="#e8c028" stroke-width="1.500"/><path d="M14 1l5 5h-5z" fill="#e8c028"/><circle cx="7" cy="15" r="3.500" fill="#f3a65f"/><path d="M3 22l4-6 4 6z" fill="#f3a65f"/><rect x="9" y="12" width="7" height="6" fill="#5cb8e8"/></svg></div>
    <div class="app"><svg viewBox="0 0 24 26"><path d="M3 1h18a2 2 0 012 2v22l-5-4H3a2 2 0 01-2-2V3a2 2 0 012-2z" fill="#6d78c4"/><path d="M6 8c4-2 8-2 12 0l2 7c-2 1.500-3 2-4 2l-1-2c-2 .5-4 .5-6 0l-1 2c-1 0-2-.5-4-2z" fill="#fff"/><circle cx="9.500" cy="12" r="1.500" fill="#6d78c4"/><circle cx="14.500" cy="12" r="1.500" fill="#6d78c4"/></svg></div>
  </div>
  <div class="tray">
    <svg class="tr-ch" viewBox="0 0 12 8"><path d="M1 7l5-5.500L11 7" stroke="#fff" stroke-width="1.200" fill="none"/></svg>
    <svg class="tr-ic tr-bat" viewBox="0 0 18 16"><path d="M2 5V2M5 5V2M0.500 5h6v3a3 3 0 01-3 3 3 3 0 01-3-3z" stroke="#fff" fill="none"/><rect x="7.500" y="5" width="9" height="7" fill="#fff"/><path d="M17 7v3" stroke="#fff"/></svg>
    <svg class="tr-ic tr-vol" viewBox="0 0 18 16"><path d="M1 6h3l4-4v12l-4-4H1z" fill="none" stroke="#fff"/><path d="M11 5a4 4 0 010 6M13.500 3a7 7 0 010 10" stroke="#fff" fill="none"/></svg>
    <svg class="tr-ic tr-wifi" viewBox="0 0 18 16"><path d="M2 15a13 13 0 0113-13M5 15a10 10 0 0110-10M8 15a7 7 0 017-7" stroke="#fff" fill="none"/><circle cx="14" cy="13" r="1.500" fill="#fff"/></svg>
    <div class="lang"><span>ENG</span><span>INTL</span></div>
    <div class="clock"><span>11:45</span><span>25.02.2021</span></div>
    <svg class="tr-note" viewBox="0 0 26 26"><path d="M1 1h18v14h-5l-4 4v-4H1z" fill="#fff"/><path d="M4 5h12M4 8h12M4 11h8" stroke="#1b1a1a"/></svg>
    <span class="badge">1</span>
  </div>
</div>
<div class="balloon">
  <svg class="tail" viewBox="0 0 12 16"><path d="M2 0l3 15h6z" fill="#fff"/><path d="M1.500 0l4 14" stroke="#000"/></svg>
  <span class="info-i">i</span>
  <div class="balloon-text"><strong>Доступны обновления LibreOffice</strong><span>Для подробностей щёлкните значок.</span></div>
</div>
</body>
</html>
```

FILE: styles.css
```css
* { box-sizing: border-box; }
html, body { margin: 0; padding: 0; }
body { position: relative; width: 1920px; height: 1080px; overflow: hidden; display: flex; flex-direction: column; background: #f0f0f0; font: 12px "Open Sans", "Liberation Sans", sans-serif; color: #111; }
b, i, em, strong { font-style: normal; }

.titlebar { height: 26px; background: #fff; display: flex; align-items: center; padding-left: 3px; flex: none; }
.app-ic { width: 15px; height: 18px; margin-top: -3px; }
.title-text { margin-left: 5px; margin-top: -3px; font-size: 11.5px; }
.winbtns { margin-left: auto; display: flex; gap: 35px; padding-right: 19px; margin-top: -6px; }
.winbtns svg { width: 11px; height: 11px; }

.menubar { height: 26px; background: #fff; display: flex; align-items: flex-start; padding: 3px 0 0 8px; gap: 15.300px; flex: none; font-size: 11.4px; }
.menu-right { margin-left: auto; display: flex; align-items: center; gap: 9px; padding-right: 7px; }
.globe { width: 16px; height: 18px; }
.mclose { width: 9px; height: 9px; }

.toolbar { height: 38px; flex: none; display: flex; align-items: center; padding-left: 3px; padding-bottom: 2px; background: linear-gradient(#fff, #f0f0f0); border-bottom: 2px solid #b0b0b0; }
.grip-v { width: 3px; height: 24px; margin-right: 5px; background: repeating-linear-gradient(#999 0 2px, transparent 2px 3px); }
.t { width: 33px; height: 34px; display: flex; align-items: center; justify-content: center; flex: none; }
.t svg { width: 24px; height: 24px; }
.t.on { background: #bddcf5; border: 1px solid #99c5ea; }
.d { width: 11px; height: 34px; flex: none; position: relative; }
.d::after { content: ""; position: absolute; left: 2px; top: 15px; border: 3.5px solid transparent; border-top: 5px solid #111; border-bottom: 0; }
.d.off::after { border-top-color: #aaa; }
.sep { width: 8px; height: 24px; flex: none; position: relative; }
.sep::after { content: ""; position: absolute; left: 4px; top: 0; bottom: 0; width: 1px; background: #c4c4c4; }
.omega { font: 27px/34px "Liberation Serif", serif; color: #adadad; }
.ftxt { font: bold 26px/34px "Liberation Sans", sans-serif; color: #fff; -webkit-text-stroke: 1px #3c70a8; }
.i-a { font: bold 15px "Liberation Sans", sans-serif; fill: #3c7fc0; }

.work { flex: 1; min-height: 0; display: flex; }
.tools { width: 51px; flex: none; border-right: 1px solid #999; display: flex; flex-direction: column; padding-top: 3px; }
.grip-h { width: 31px; height: 3px; margin: 0 0 5px 8px; background: repeating-linear-gradient(90deg, #999 0 2px, transparent 2px 3px); flex: none; }
.row { display: flex; height: 35px; flex: none; padding-left: 1px; }
.row.solo { padding-left: 7px; }
.l { width: 33px; height: 34px; display: flex; align-items: center; justify-content: center; }
.l svg { width: 24px; height: 24px; }
.l.on { background: #bddcf5; border: 1px solid #99c5ea; }
.hsep { height: 8px; flex: none; position: relative; }
.hsep::after { content: ""; position: absolute; left: 12px; width: 24px; top: 3px; height: 1px; background: #c4c4c4; }

.pages { width: 156px; flex: none; display: flex; flex-direction: column; }
.pages-head { height: 25px; flex: none; padding: 0 3px 0 0; display: flex; align-items: center; justify-content: space-between; }
.pages-head strong { font-size: 11px; font-weight: 700; }
.pages-head svg { width: 10px; height: 10px; }
.pages-list { flex: 1; background: #fff; margin-bottom: 5px; border-top: 1px solid #aaa; padding: 8px 9px 0 8px; }
.thumb { height: 160px; border: 1px solid #5d80a5; background: linear-gradient(#7d9bbb, #a5c8ea); display: flex; padding: 4px 4px 3px 0; }
.thumb-no { width: 25px; height: 16px; margin-top: -3px; text-align: right; padding-right: 5px; font: bold 14px/16px "Liberation Sans", sans-serif; color: #555; }
.thumb-page { width: 107px; height: 151px; box-shadow: 1px 1px 3px #445; }
.thumb-wires { color: #5a80b0; stroke-width: 8; }
.thumb-box rect { stroke: #5f82a8; stroke-width: 8; }
.thumb-box .g { fill: #00e840; }
.thumb-box .y { fill: #ffff00; }
.thumb-box .b { fill: #729fcf; }
.thumb-box .r { fill: #f00010; }
.thumb-greek { stroke: #224; stroke-width: 6; stroke-dasharray: 8 4; opacity: .55; fill: none; }

.splitter { width: 15px; flex: none; position: relative; display: flex; align-items: center; padding-left: 3px; }
.splitter::before { content: ""; position: absolute; left: 4px; top: 0; bottom: 0; width: 8px; border-left: 1px solid #aaa; border-right: 1px solid #aaa; background: #fff; }
.handle { width: 7px; height: 73px; background: #666; position: relative; display: flex; align-items: center; justify-content: center; }
.handle i { border: 4px solid transparent; border-right: 5px solid #fff; border-left: 0; }

.main { flex: 1; min-width: 0; display: flex; flex-direction: column; }
.ruler-row { display: flex; padding-top: 3px; height: 18px; flex: none; }
.corner { width: 18px; flex: none; display: flex; justify-content: center; padding-top: 1px; }
.corner svg { width: 14px; height: 14px; }
.hruler { flex: 1; height: 15px; margin-right: 16px; position: relative; display: flex; padding-left: 9px; overflow: hidden; font: 10px "Liberation Sans", sans-serif; color: #555;
  border-top: 1px solid #c8c8c8; border-bottom: 1px solid #b4b4b4;
  background:
    linear-gradient(90deg, #777 0 1px, transparent 1px) 37px 50%/28px 4px repeat-x,
    linear-gradient(90deg, #888 0 1px, transparent 1px) 23px 100%/28px 2px repeat-x,
    linear-gradient(#fff, #fff) 555px 0/532px 100% no-repeat,
    #f0f0f0; }
.hruler span { width: 28px; flex: none; text-align: center; line-height: 13px; }
.marker { position: absolute; width: 12px; height: 16px; top: -1px; }
.m-left { left: 549px; }
.m-right { left: 1081px; }

.mid { flex: 1; min-height: 0; display: flex; }
.vruler { width: 17px; margin: 6px 1px 1px 0; flex: none; overflow: hidden; font: 10px "Liberation Sans", sans-serif; color: #555;
  border: 1px solid #bcbcbc; border-radius: 2px;
  background:
    linear-gradient(#777 0 1px, transparent 1px) 50% 25px/4px 28px repeat-y,
    linear-gradient(#fff, #fff) 0 39px/100% 775px no-repeat,
    #ececec; }
.vcells { margin-top: -3px; display: flex; flex-direction: column; }
.vcells span { height: 28px; flex: none; display: flex; align-items: center; justify-content: center; }
.vcells em { writing-mode: vertical-rl; transform: rotate(180deg); line-height: 15px; }
.canvas { flex: 1; min-width: 0; background: #dedede; padding: 19px 0 0 528px; border-bottom: 1px solid #fff; overflow: hidden; }
.vscroll { width: 16px; flex: none; background: #f0f0f0; display: flex; flex-direction: column; align-items: center; padding: 205px 0 4px; }
.vthumb { width: 14px; height: 447px; background: #cdcdcd; }
.chev-down { width: 10px; height: 6px; margin-top: auto; }
.hscroll { height: 16px; flex: none; display: flex; align-items: center; margin-right: 8px; }
.hscroll svg { width: 6px; height: 10px; flex: none; }
.hscroll svg:first-child { margin-left: 2px; margin-right: 65px; }
.hscroll svg:last-child { margin-left: 50px; }
.hthumb { width: 1539px; height: 15px; background: #cdcdcd; }
.tabs { height: 23px; flex: none; display: flex; align-items: stretch; padding-left: 9px; border-bottom: 1px solid #aaa; margin-left: -7px; margin-right: -8px; }
.tabnav { width: 101px; display: flex; gap: 11.700px; align-items: center; padding-left: 6px; flex: none; }
.tabnav svg { width: 10px; height: 14px; }
.tab { padding: 4px 14px 0; font-size: 11px; color: #222; white-space: nowrap; }
.tab.active { width: 77px; padding: 4px 0 0; text-align: center; background: #fff; border-bottom: 3px solid #666; }
.tab:last-child { margin-left: 3px; }

.sidebar { width: 8px; flex: none; border-left: 1px solid #aaa; display: flex; align-items: center; }
.sidebar .handle { background: #555; }
.sidebar .handle i { border-right-color: #555; }

.page { width: 587px; height: 829px; background: #fff; position: relative; box-shadow: 0 0 4px 1px #888; }
.margins { position: absolute; left: 27px; top: 27px; width: 533px; height: 776px; border: 1px solid #c8c8c8; }
.wires-svg { position: absolute; inset: 0; width: 587px; height: 829px; color: #4372ab; stroke-width: 1.5; }
.w { fill: none; stroke: currentColor; }
.a { fill: currentColor; stroke: none; }
.node { position: absolute; display: flex; align-items: center; justify-content: center; text-align: center; white-space: nowrap; padding-top: 2px; font: 17.500px/19.6px "Liberation Sans", sans-serif; color: #000; border: 1px solid rgba(52, 101, 164, .75); }
.node p { margin: 0; }
.green { background: #00ff00; }
.yellow { background: #ffff00; }
.blue { background: #729fcf; }
.red { background: #ff0000; }
.sp { text-decoration: underline wavy #d01818 1px; text-underline-offset: 2px; text-decoration-skip-ink: none; }
.n-osn { left: 38px; top: 75px; width: 88px; height: 39px; }
.n-raz { left: 156px; top: 125px; width: 101px; height: 37px; }
.n-teh { left: 50px; top: 167px; width: 115px; height: 56px; }
.n-ais { left: 285px; top: 167px; width: 64px; height: 29px; }
.n-it { left: 209px; top: 211px; width: 99px; height: 51px; }
.n-fiz { left: 455px; top: 134px; width: 65px; height: 28px; }
.n-bzd { left: 450px; top: 212px; width: 92px; height: 48px; }
.n-ksp { left: 13px; top: 268px; width: 65px; height: 28px; }
.n-pro { left: 108px; top: 285px; width: 166px; height: 64px; }
.n-spo { left: 287px; top: 285px; width: 130px; height: 64px; }
.n-mat { left: 108px; top: 357px; width: 166px; height: 59px; }
.n-gum { left: 287px; top: 357px; width: 132px; height: 59px; }
.n-vse { left: 464px; top: 396px; width: 103px; height: 51px; }
.n-fil { left: 291px; top: 441px; width: 103px; height: 34px; }
.n-ang { left: 352px; top: 486px; width: 106px; height: 56px; }
.n-ist { left: 483px; top: 497px; width: 68px; height: 37px; }
.n-man { left: 103px; top: 494px; width: 93px; height: 54px; }
.n-dis { left: 53px; top: 581px; width: 73px; height: 42px; }
.n-teo { left: 159px; top: 581px; width: 93px; height: 40px; }
.n-fzk { left: 226px; top: 654px; width: 79px; height: 28px; }
.n-tip { left: 405px; top: 603px; width: 76px; height: 34px; }
.n-vvp { left: 456px; top: 696px; width: 67px; height: 23px; }

.status { height: 22px; flex: none; display: flex; align-items: stretch; font-size: 11px; background: #f0f0f0; padding-top: 1px; }
.seg { display: flex; align-items: center; gap: 6px; flex: none; border-right: 1px solid #aaa; margin-block: 1px; }
.seg svg { flex: none; }
.s1 { width: 82px; padding-left: 11px; }
.s2 { width: 589px; }
.s3 { width: 460px; padding-left: 10px; }
.s4 { width: 269px; border-right: 0; padding-left: 10px; }
.s4 svg { width: 16px; height: 14px; }
.s5 { width: 257px; gap: 3px; font-size: 11.3px; }
.s5 svg { width: 18px; height: 16px; }
.s6 { width: 23px; justify-content: center; }
.s6 svg { width: 12px; height: 12px; }
.s7 { width: 30px; }
.s8 { width: 23px; justify-content: center; }
.s8 svg { width: 16px; height: 16px; }
.s9 { width: 143px; padding-left: 9px; gap: 5px; }
.zm { width: 10px; height: 2px; background: #555; flex: none; }
.zp { width: 10px; height: 10px; flex: none; background: linear-gradient(#555, #555) 50% 50%/10px 2px no-repeat, linear-gradient(#555, #555) 50% 50%/2px 10px no-repeat; }
.slider { width: 98px; height: 10px; position: relative; background: linear-gradient(#888, #888) 0 50%/100% 1px no-repeat; }
.knob { position: absolute; left: 33px; top: 0; width: 3px; height: 10px; background: #666; }
.mid-tick { position: absolute; left: 47px; top: 2px; width: 1px; height: 6px; background: #666; }
.s10 { width: 44px; border-right: 0; padding-left: 9px; }

.taskbar { height: 40px; flex: none; background: #1b1a1a; display: flex; align-items: stretch; color: #fff; }
.start { width: 48px; display: flex; align-items: center; justify-content: center; flex: none; }
.start svg { width: 16px; height: 16px; }
.search { width: 344px; flex: none; background: #f0f0f0; border: 1px solid #c8c8c8; border-width: 1px 0; display: flex; align-items: center; color: #333; font-size: 14px; padding-left: 11px; gap: 11px; }
.search svg { width: 18px; height: 18px; }
.apps { display: flex; }
.app { width: 49.200px; display: flex; align-items: center; justify-content: center; position: relative; }
.app svg { width: 24px; height: 24px; }
.app:nth-child(8)::after, .app:nth-child(13)::after, .app:nth-child(14)::after { content: ""; position: absolute; left: 4px; right: 4px; bottom: 0; height: 3px; background: #f0a0a8; }
.app.active { background: #4a4a4a; }
.app.active::after { left: 0 !important; right: 0 !important; }
.tray { margin-left: auto; display: flex; align-items: center; position: relative; padding-right: 20px; }
.tr-ch { width: 12px; height: 8px; margin-right: 9px; }
.tr-ic { width: 18px; height: 16px; }
.tr-bat { margin-right: 5px; }
.tr-vol { margin-right: 7px; }
.tr-wifi { margin-right: 9px; }
.lang, .clock { display: flex; flex-direction: column; font-size: 11px; line-height: 18px; }
.lang { width: 25px; }
.clock { align-items: center; width: 58px; margin-left: 8px; margin-right: 12px; }
.tr-note { width: 26px; height: 26px; }
.badge { position: absolute; right: 14px; bottom: 5px; width: 17px; height: 17px; border-radius: 50%; border: 1.500px solid #777; background: #222; font-size: 10px; font-weight: 700; display: flex; align-items: center; justify-content: center; }

.balloon { position: absolute; left: 1639px; top: 64px; width: 266px; height: 59px; background: #fff; border: 2px solid #000; border-radius: 6px; display: flex; align-items: center; padding-left: 12px; gap: 13px; }
.tail { position: absolute; left: 244px; top: -15px; width: 12px; height: 16px; }
.info-i { width: 26px; height: 26px; border-radius: 50%; background: #4d80b8; color: #fff; font: italic bold 21px/26px "Liberation Serif", serif; text-align: center; flex: none; }
.balloon-text { display: flex; flex-direction: column; gap: 9px; font-size: 11.1px; line-height: 16px; white-space: nowrap; padding-top: 3px; }
.balloon-text strong { font-weight: 700; }
```
